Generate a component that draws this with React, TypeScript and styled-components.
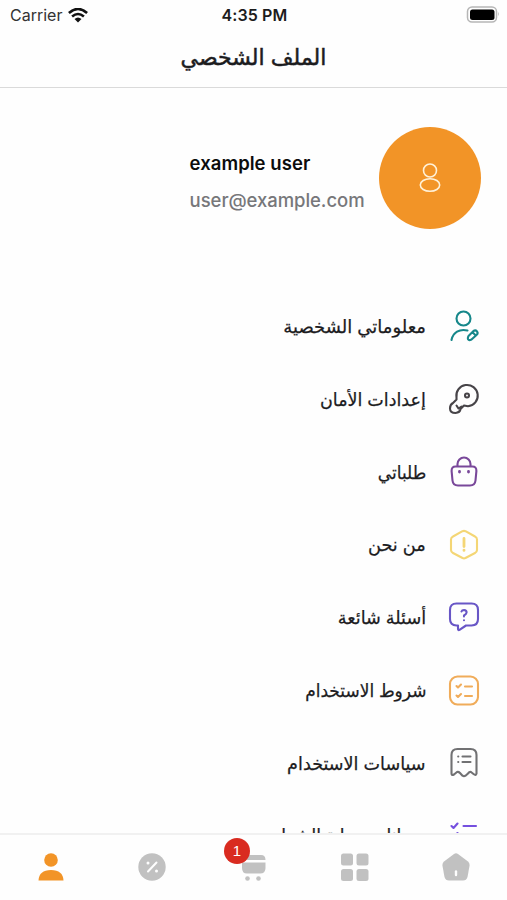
import React from 'react';
import styled, { createGlobalStyle } from 'styled-components';

const GlobalStyle = createGlobalStyle`
  * { box-sizing: border-box; }
  body { margin: 0; background: #fefefe; }
`;

const Screen = styled.div`
  width: 507px;
  height: 900px;
  overflow: hidden;
  display: flex;
  flex-direction: column;
  background: #fefefe;
  color: #1c1c1e;
  font-family: Inter, 'DejaVu Sans', sans-serif;
`;

const StatusBar = styled.div`
  height: 30px;
  display: grid;
  grid-template-columns: 1fr auto 1fr;
  align-items: center;
  padding: 0 8px 0 10px;
`;

const Carrier = styled.div`
  display: flex;
  align-items: center;
  gap: 6px;
  font-size: 16px;
  line-height: 30px;
  color: #333;
`;

const Clock = styled.div`
  font-size: 16px;
  font-weight: 600;
  letter-spacing: 0.1px;
  color: #1c1c1c;
`;

const Battery = styled.svg`
  justify-self: end;
  margin-top: -2px;
`;

const Header = styled.header`
  height: 58px;
  flex: none;
  border-bottom: 1px solid #dadada;
  display: flex;
  justify-content: center;
  padding-top: 9px;
`;

const Title = styled.h1`
  margin: 0;
  font-size: 22px;
  line-height: 36px;
  font-weight: 400;
  -webkit-text-stroke: 0.5px currentColor;
  white-space: nowrap;
`;

const Profile = styled.section`
  flex: none;
  height: 202px;
  direction: rtl;
  display: flex;
  align-items: flex-start;
  gap: 14px;
  padding: 39px 26.5px 0 0;
`;

const Avatar = styled.div`
  width: 102px;
  height: 102px;
  border-radius: 50%;
  background: #f29427;
  display: grid;
  place-items: center;
`;

const Identity = styled.div`
  direction: ltr;
  padding-top: 22px;
`;

const Name = styled.div`
  font-size: 18.5px;
  line-height: 28px;
  font-weight: 600;
  letter-spacing: 0.05px;
  color: #0c0c0c;
`;

const Email = styled.div`
  margin-top: 9px;
  font-size: 18.5px;
  line-height: 28px;
  font-weight: 500;
  letter-spacing: -0.06px;
  color: #77777a;
`;

const Menu = styled.ul`
  list-style: none;
  margin: 0;
  padding: 0 27px 0 0;
  flex: 1;
  min-height: 0;
  overflow: hidden;
  direction: rtl;
`;

const MenuRow = styled.li`
  height: 72.85px;
  display: flex;
  align-items: center;
  gap: 22px;

  &:last-child {
    height: 70.85px;
  }
`;

const Label = styled.span<{ $stretch: number }>`
  font-size: 18px;
  line-height: 32px;
  padding-top: 1px;
  -webkit-text-stroke: 0.25px currentColor;
  white-space: nowrap;
  transform: scaleX(${(p) => p.$stretch});
  transform-origin: right center;
`;

const LineIcon = styled.svg<{ $tone: string }>`
  flex: none;
  width: 32px;
  height: 32px;
  fill: none;
  stroke: ${(p) => p.$tone};
  stroke-width: 2.1;
  stroke-linecap: round;
  stroke-linejoin: round;
`;

const TabBar = styled.nav`
  flex: none;
  height: 67px;
  border-top: 2px solid #f1f1f1;
  display: grid;
  grid-template-columns: repeat(5, 1fr);
  background: #fefefe;
`;

const Tab = styled.button<{ $active?: boolean }>`
  position: relative;
  border: 0;
  padding: 0;
  background: none;
  height: 64px;
  display: grid;
  place-items: center;
  color: ${(p) => (p.$active ? '#f29427' : '#c1c1c1')};
`;

const Badge = styled.span`
  position: absolute;
  left: 21px;
  top: 3px;
  width: 26px;
  height: 26px;
  border-radius: 50%;
  background: #d92b20;
  color: #fff;
  font-size: 15px;
  line-height: 26px;
  text-align: center;
`;

type Item = { label: string; tone: string; stretch: number; icon: React.ReactNode };

const items: Item[] = [
  {
    label: 'معلوماتي الشخصية', tone: '#16878a', stretch: 1,
    icon: <><circle cx="15.500" cy="8.500" r="7" /><path d="M3.500 30C5 22.500 11.500 18.500 19.500 20.500" /><path d="M20.500 26L25.500 21Q27.500 19.700 29 21.500T28.500 25L23.500 29.500Q21 30.700 20.200 29.500T20.500 26ZM24.500 22.300l3 3" /></>,
  },
  {
    label: 'إعدادات الأمان', tone: '#474448', stretch: 0.973,
    icon: <><path d="M8.500 14.500A10.700 10.700 0 1 1 20 23.300L16 22.500L12.500 26Q12 29.500 7.500 30Q2 30 2 25.500Q2 21.500 5 20L8.500 16.500Z" /><path d="M8.500 22.500l2 3M10.500 25.500l3-2" /><circle cx="19" cy="12.500" r="2" /></>,
  },
  {
    label: 'طلباتي', tone: '#79489a', stretch: 0.945,
    icon: <><path d="M7.500 10.500h17Q28.500 10.500 28.400 15L27.500 24.500Q27 29.500 22 29.500H10Q5 29.500 4.500 24.500L3.600 15Q3.500 10.500 7.500 10.500ZM9.500 10V8a6.500 6.500 0 0 1 13 0V10" /><path d="M11.500 15.500v.5M20.500 15.500v.5" strokeWidth="2.800" /></>,
  },
  {
    label: 'من نحن', tone: '#f4d675', stretch: 0.985,
    icon: <><path d="M14.500 2.200Q16 1.500 17.500 2.200L27 7.500Q29 8.500 29 10.500V21Q29 23 27 24L17.500 29Q16 29.700 14.500 29L5 24Q3 23 3 21V10.500Q3 8.500 5 7.500Z" /><path d="M16 9.500v8M16 21.100v.3" strokeWidth="2.800" /></>,
  },
  {
    label: 'أسئلة شائعة', tone: '#6856c6', stretch: 0.98,
    icon: <><path d="M8.500 1.500h15Q30 1.500 30 8v9Q30 23.500 23.500 23.500H18L11.500 27.800Q10 28.700 10 26.700V23.500H8.500Q2 23.500 2 17V8Q2 1.500 8.500 1.500Z" /><path d="M13.500 9.500Q14 8 16 8Q18.600 8.100 18.600 10.500Q18.500 12 16 13.500V14.500M16 18.200v.1" /></>,
  },
  {
    label: 'شروط الاستخدام', tone: '#f0ac5a', stretch: 0.944,
    icon: <><rect x="2" y="1.500" width="28" height="28" rx="7.500" /><path d="M17 11.500h7M17 21h7M8.500 11l1.500 1.500 3-3M8.500 20.500l1.500 1.500 3-3" /></>,
  },
  {
    label: 'سياسات الاستخدام', tone: '#717173', stretch: 0.978,
    icon: <><path d="M9.500 2h13Q28.500 2 28.500 8V26.500Q28 29 25.500 27L23 25Q21.500 24.500 20 26.500L17.500 28.700Q16 29.700 14.500 28.700L12 26Q10.500 24.500 9 25L6 27.500Q3.500 29 3.500 26.500V8Q3.500 2 9.500 2Z" /><path d="M14.500 9.500h8M14.500 15h8M10.200 9.500h.1M10.200 15h.1" /></>,
  },
  {
    label: 'ضمانات حماية الشراء', tone: '#7550df', stretch: 0.955,
    icon: <path d="M15.500 7h12.500M3.500 7l2 2 4-4.500M15.500 17h12.500M3.500 16.500l2 2 4-4.500" />,
  },
];

export default function App() {
  return (
    <>
      <GlobalStyle />
      <Screen>
        <StatusBar>
          <Carrier>
            Carrier
            <svg width="20" height="15" viewBox="0 0 20 15" fill="none" stroke="#111" strokeWidth="2.600">
              <path d="M.9 5Q10-3 19.100 5M4.100 8.500Q10 3.500 15.900 8.500" />
              <path d="M6.500 11Q10 8 13.500 11L10 14.500Z" fill="#111" stroke="none" />
            </svg>
          </Carrier>
          <Clock>4:35 PM</Clock>
          <Battery width="33" height="17" viewBox="0 0 33 17">
            <rect x="1.500" y="1" width="29" height="15" rx="4.500" fill="none" stroke="#b6b6b6" strokeWidth="1.500" />
            <rect x="4" y="3.500" width="24.500" height="10.500" rx="2.500" fill="#000" />
            <path d="M32 6v4q1.500-2 0-4Z" fill="#b6b6b6" />
          </Battery>
        </StatusBar>
        <Header><Title>الملف الشخصي</Title></Header>
        <Profile>
          <Avatar>
            <svg width="24" height="32" viewBox="0 0 24 32" fill="none" stroke="#fff1d8" strokeWidth="1.600">
              <circle cx="12" cy="8.500" r="6.500" />
              <ellipse cx="12" cy="23" rx="9.700" ry="6.300" />
            </svg>
          </Avatar>
          <Identity>
            <Name>example user</Name>
            <Email>user@example.com</Email>
          </Identity>
        </Profile>
        <Menu>
          {items.map((item) => (
            <MenuRow key={item.label}>
              <LineIcon viewBox="0 0 32 32" $tone={item.tone}>{item.icon}</LineIcon>
              <Label $stretch={item.stretch}>{item.label}</Label>
            </MenuRow>
          ))}
        </Menu>
        <TabBar>
          <Tab $active aria-label="الملف الشخصي">
            <svg width="28" height="30" viewBox="0 0 28 30" fill="currentColor">
              <circle cx="14" cy="8" r="6.800" />
              <path d="M1.500 28.500Q2 18 14 18T26.500 28.500Z" />
            </svg>
          </Tab>
          <Tab aria-label="العروض">
            <svg width="28" height="28" viewBox="0 0 28 28" fill="currentColor">
              <circle cx="14" cy="14" r="13.700" />
              <path d="M10 18.500l8.500-9" stroke="#fefefe" strokeWidth="2" strokeLinecap="round" />
              <circle cx="10" cy="10" r="1.500" fill="#fefefe" />
              <circle cx="18.500" cy="18" r="1.500" fill="#fefefe" />
            </svg>
          </Tab>
          <Tab aria-label="السلة">
            <svg width="28" height="30" viewBox="0 0 28 30" fill="currentColor">
              <path d="M3 3H22Q26.500 3 26.500 8H3ZM3 10.500H26.500V16Q26.500 21.500 21 21.500H8Q3 21.500 3 16Z" />
              <circle cx="8.500" cy="26.500" r="2.300" />
              <circle cx="19.500" cy="26.500" r="2.300" />
            </svg>
            <Badge>1</Badge>
          </Tab>
          <Tab aria-label="الأقسام">
            <svg width="28" height="28" viewBox="0 0 28 28" fill="currentColor">
              <rect x="0" y=".5" width="12" height="12" rx="2.500" />
              <rect x="15.500" y=".5" width="12" height="12" rx="2.500" />
              <rect x="0" y="16" width="12" height="12" rx="2.500" />
              <rect x="15.500" y="16" width="12" height="12" rx="2.500" />
            </svg>
          </Tab>
          <Tab aria-label="الرئيسية">
            <svg width="28" height="28" viewBox="0 0 28 28" fill="currentColor">
              <path d="M12 1Q14-.3 16 1L26 8.500Q28 10.200 27.500 13L25.500 24Q24.500 27.500 21 27.500H7Q3.500 27.500 2.500 24L.5 13Q0 10.200 2 8.500Z" />
              <path d="M14 18.500v3.500" stroke="#fefefe" strokeWidth="2.400" strokeLinecap="round" />
            </svg>
          </Tab>
        </TabBar>
      </Screen>
    </>
  );
}
